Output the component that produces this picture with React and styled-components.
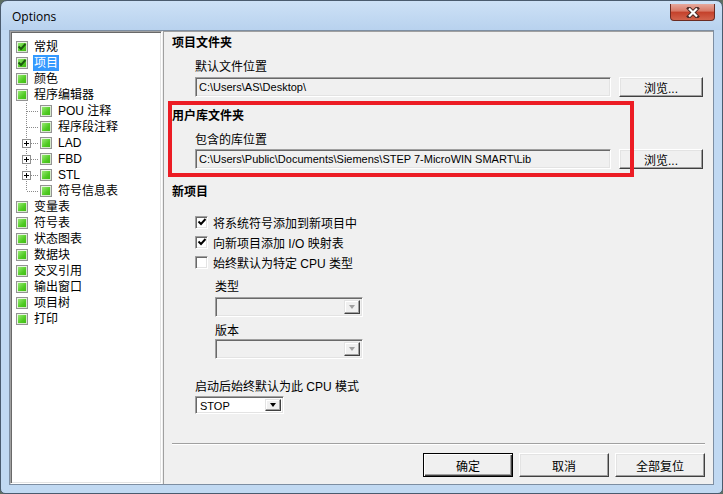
import React from "react";
import styled, { createGlobalStyle, css } from "styled-components";

const GlobalStyle = createGlobalStyle`
  html, body { margin: 0; padding: 0; }
  body {
    width: 723px;
    height: 494px;
    overflow: hidden;
    background: #5d6e62;
    font-family: "Liberation Sans", "Noto Sans CJK SC", sans-serif;
    font-size: 12px;
    color: #000;
  }
`;

const Window = styled.div`
  width: 723px;
  height: 494px;
  box-sizing: border-box;
  border: 1px solid #4a5b6e;
  border-radius: 7px 7px 5px 5px;
  background: linear-gradient(#cde1f6, #b8d2ee 29px, #c1d9f2 29px);
  display: flex;
  flex-direction: column;
  padding: 0 8px 8px;
`;

const TitleBar = styled.div`
  height: 29px;
  display: flex;
  align-items: flex-start;
  justify-content: space-between;
`;

const Title = styled.div`
  font-family: "Open Sans", "Liberation Sans", sans-serif;
  font-size: 12px;
  padding: 7px 0 0 3px;
  color: #000;
`;

const CloseButton = styled.div`
  width: 45px;
  height: 17px;
  margin: 3px -1px 0 0;
  box-sizing: border-box;
  border: 1px solid #6b2b22;
  border-top: none;
  border-radius: 0 0 4px 4px;
  background: linear-gradient(#e6a99d, #d87865 45%, #c4402a 50%, #d2634c);
  display: flex;
  align-items: center;
  justify-content: center;
`;

const Client = styled.div`
  flex: 1;
  border: 1px solid #7d8ea2;
  background: #f0f0f0;
  display: flex;
  min-height: 0;
`;

/* ---------- tree ---------- */

const Tree = styled.div`
  width: 152px;
  box-sizing: border-box;
  background: #fff;
  border: 1px solid;
  border-color: #a0a0a0 #ffffff #ffffff #a0a0a0;
  box-shadow: inset 1px 1px #696969, inset -1px -1px #e3e3e3;
  padding: 7px 0 0 5px;
`;

const TreeRow = styled.div`
  height: 16px;
  display: flex;
  align-items: center;
  white-space: nowrap;
`;

const StateIcon = styled.span`
  width: 12px;
  height: 12px;
  box-sizing: border-box;
  border: 1px solid #939393;
  box-shadow: inset 1px 1px #e9f7e2, inset -1px -1px #d6e8cc;
  background: linear-gradient(135deg, #a7ee85, #4fcb22 60%, #3eb514);
  display: flex;
  align-items: center;
  justify-content: center;
  flex: none;
  margin-right: 5px;
`;

const Label = styled.span`
  line-height: 16px;
  padding: 0 1px;
  ${p => p.$selected && css`
    background: #3399ff;
    color: #fff;
  `}
`;

const Check = ({ color = "#1d5a10" }) => (
  <svg width="10" height="10" viewBox="0 0 10 10">
    <path d="M1.5 4.5 L4 7 L8.5 2" fill="none" stroke={color} strokeWidth="1.9" />
  </svg>
);

const Connector = ({ last, plus }) => (
  <svg width="24" height="16" viewBox="0 0 24 16" style={{ flex: "none" }}>
    <line x1="10.5" y1="0" x2="10.5" y2={last ? 8 : 16} stroke="#8a8a8a" strokeDasharray="1 1" />
    <line x1="11" y1="8.5" x2="23" y2="8.5" stroke="#8a8a8a" strokeDasharray="1 1" />
    {plus && (
      <g>
        <rect x="6.5" y="4.5" width="8" height="8" fill="#fff" stroke="#8f8f8f" />
        <line x1="8" y1="8.5" x2="13" y2="8.5" stroke="#000" />
        <line x1="10.5" y1="6" x2="10.5" y2="11" stroke="#000" />
      </g>
    )}
  </svg>
);

const treeItems = [
  { text: "常规", checked: true },
  { text: "项目", checked: true, selected: true },
  { text: "颜色" },
  { text: "程序编辑器" },
  { text: "POU 注释", child: true },
  { text: "程序段注释", child: true },
  { text: "LAD", child: true, plus: true },
  { text: "FBD", child: true, plus: true },
  { text: "STL", child: true, plus: true },
  { text: "符号信息表", child: true, last: true },
  { text: "变量表" },
  { text: "符号表" },
  { text: "状态图表" },
  { text: "数据块" },
  { text: "交叉引用" },
  { text: "输出窗口" },
  { text: "项目树" },
  { text: "打印" },
];

/* ---------- right panel ---------- */

const Panel = styled.div`
  flex: 1;
  position: relative;
  border-left: 1px solid #a0a0a0;
  border-top: 1px solid #a0a0a0;
  margin-left: 1px;
  padding: 3px 8px 7px 8px;
  display: flex;
  flex-direction: column;
`;

const Heading = styled.div`
  font-weight: bold;
  line-height: 16px;
  margin-top: ${p => p.$mt || 0}px;
`;

const Text = styled.div`
  line-height: 16px;
  padding-left: ${p => p.$indent || 23}px;
  margin-top: ${p => p.$mt || 0}px;
`;

const PathRow = styled.div`
  display: flex;
  gap: 8px;
  padding-left: 23px;
  margin-top: ${p => p.$mt || 0}px;
`;

const sunken = css`
  box-sizing: border-box;
  border: 1px solid;
  border-color: #a0a0a0 #ffffff #ffffff #a0a0a0;
  box-shadow: inset 1px 1px #696969, inset -1px -1px #e3e3e3;
`;

const PathBox = styled.div`
  ${sunken};
  width: 416px;
  height: 20px;
  background: #f0f0f0;
  font-size: 11px;
  line-height: 18px;
  padding-left: 3px;
  white-space: nowrap;
  overflow: hidden;
`;

const Button = styled.div`
  box-sizing: border-box;
  width: ${p => p.$w || 90}px;
  height: ${p => p.$h || 24}px;
  background: #f0f0f0;
  border: 1px solid;
  border-color: #ffffff #404040 #404040 #ffffff;
  box-shadow: inset -1px -1px #a0a0a0, inset 1px 1px #e3e3e3;
  display: flex;
  align-items: center;
  justify-content: center;
  ${p => p.$default && css`
    border: 1px solid #000;
    box-shadow: inset 1px 1px #fff, inset -1px -1px #404040, inset -2px -2px #a0a0a0;
  `}
`;

const CheckRow = styled.div`
  height: 20px;
  display: flex;
  align-items: center;
  gap: 5px;
  padding-left: 23px;
  margin-top: ${p => p.$mt || 0}px;
`;

const CheckBox = styled.span`
  ${sunken};
  width: 13px;
  height: 13px;
  background: #fff;
  display: flex;
  align-items: center;
  justify-content: center;
`;

const Combo = styled.div`
  ${sunken};
  width: ${p => p.$w}px;
  height: ${p => p.$h || 20}px;
  margin-left: ${p => p.$ml || 0}px;
  margin-top: ${p => p.$mt || 0}px;
  background: ${p => (p.$disabled ? "#f0f0f0" : "#fff")};
  display: flex;
  align-items: stretch;
  justify-content: space-between;
  padding: 2px;
  font-size: 11px;
`;

const ComboText = styled.span`
  line-height: 14px;
  padding-left: 2px;
`;

const DropButton = styled.span`
  width: 16px;
  box-sizing: border-box;
  background: #f0f0f0;
  border: 1px solid;
  border-color: #e3e3e3 #404040 #404040 #e3e3e3;
  box-shadow: inset -1px -1px #a0a0a0, inset 1px 1px #fff;
  display: flex;
  align-items: center;
  justify-content: center;
`;

const Arrow = styled.span`
  width: 0;
  height: 0;
  border-left: 3.5px solid transparent;
  border-right: 3.5px solid transparent;
  border-top: 4px solid ${p => (p.$disabled ? "#a0a0a0" : "#000")};
`;

const Footer = styled.div`
  margin-top: auto;
  display: flex;
  flex-direction: column;
`;

const Separator = styled.div`
  height: 1px;
  background: #a0a0a0;
  border-bottom: 1px solid #fff;
`;

const ButtonBar = styled.div`
  display: flex;
  justify-content: flex-end;
  gap: 6px;
  margin-top: 8px;
`;

const Annotation = styled.div`
  position: absolute;
  left: 4px;
  top: 69px;
  width: 466px;
  height: 76px;
  box-sizing: border-box;
  border: 4px solid #ec1c24;
  pointer-events: none;
`;

export default function App() {
  return (
    <>
      <GlobalStyle />
      <Window>
        <TitleBar>
          <Title>Options</Title>
          <CloseButton>
            <svg width="14" height="11" viewBox="0 0 14 11">
              <path d="M3 1.5 L11 9.5 M11 1.5 L3 9.5" stroke="#4a2a26" strokeWidth="4" strokeLinecap="square" />
              <path d="M3 1.5 L11 9.5 M11 1.5 L3 9.5" stroke="#fff" strokeWidth="2.2" />
            </svg>
          </CloseButton>
        </TitleBar>
        <Client>
          <Tree>
            {treeItems.map(item => (
              <TreeRow key={item.text}>
                {item.child && <Connector last={item.last} plus={item.plus} />}
                <StateIcon>{item.checked && <Check />}</StateIcon>
                <Label $selected={item.selected}>{item.text}</Label>
              </TreeRow>
            ))}
          </Tree>
          <Panel>
            <Heading>项目文件夹</Heading>
            <Text $mt={8}>默认文件位置</Text>
            <PathRow $mt={2}>
              <PathBox>C:\Users\AS\Desktop\</PathBox>
              <Button $w={84} $h={20}>浏览...</Button>
            </PathRow>
            <Heading $mt={11}>用户库文件夹</Heading>
            <Text $mt={8}>包含的库位置</Text>
            <PathRow $mt={1}>
              <PathBox>C:\Users\Public\Documents\Siemens\STEP 7-MicroWIN SMART\Lib</PathBox>
              <Button $w={84} $h={20}>浏览...</Button>
            </PathRow>
            <Heading $mt={15}>新项目</Heading>
            <CheckRow $mt={12}>
              <CheckBox><Check color="#000" /></CheckBox>
              将系统符号添加到新项目中
            </CheckRow>
            <CheckRow>
              <CheckBox><Check color="#000" /></CheckBox>
              向新项目添加 I/O 映射表
            </CheckRow>
            <CheckRow>
              <CheckBox />
              始终默认为特定 CPU 类型
            </CheckRow>
            <Text $indent={43} $mt={7}>类型</Text>
            <Combo $w={148} $ml={43} $mt={2} $disabled>
              <ComboText />
              <DropButton><Arrow $disabled /></DropButton>
            </Combo>
            <Text $indent={43} $mt={6}>版本</Text>
            <Combo $w={148} $ml={43} $disabled>
              <ComboText />
              <DropButton><Arrow $disabled /></DropButton>
            </Combo>
            <Text $mt={20}>启动后始终默认为此 CPU 模式</Text>
            <Combo $w={89} $h={18} $ml={23} $mt={1}>
              <ComboText>STOP</ComboText>
              <DropButton><Arrow /></DropButton>
            </Combo>
            <Footer>
              <Separator />
              <ButtonBar>
                <Button $default>确定</Button>
                <Button>取消</Button>
                <Button>全部复位</Button>
              </ButtonBar>
            </Footer>
            <Annotation />
          </Panel>
        </Client>
      </Window>
    </>
  );
}
